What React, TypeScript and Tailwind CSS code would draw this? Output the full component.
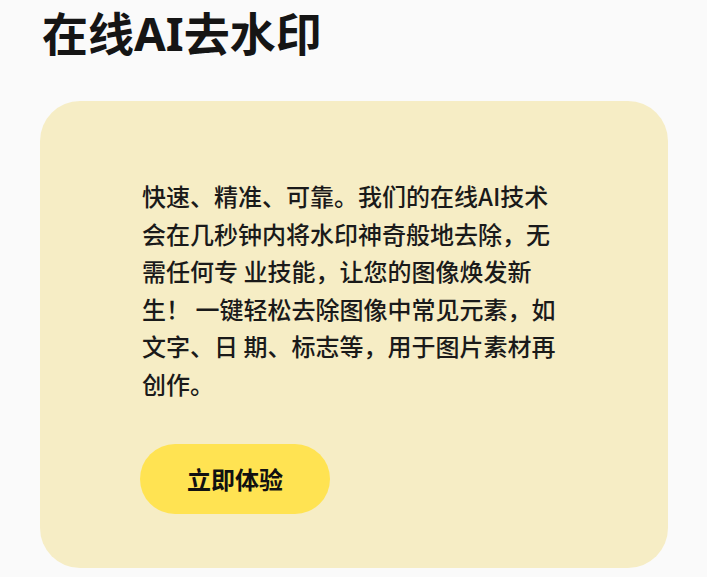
export default function App() {
  return (
    <div className="min-h-[577px] bg-[#fafafa] px-10 pt-[6px] font-['Noto_Sans_CJK_SC','Noto_Sans',sans-serif] text-[#1a1a1a]">
      <h1 className="font-['Noto_Sans','Noto_Sans_CJK_SC',sans-serif] text-[46px] font-bold leading-[54px] pl-[2px] text-[#151515]">
        在线AI去水印
      </h1>
      <div className="mt-[41px] w-[628px] rounded-[40px] bg-[#f6edc5] pl-[100px] pr-10 pt-[76px] pb-[54px]">
        <p className="w-[420px] text-[24px] font-medium leading-[37.6px] pl-[2px]">
          快速、精准、可靠。我们的在线AI技术会在几秒钟内将水印神奇般地去除，无需任何专 业技能，让您的图像焕发新生！ 一键轻松去除图像中常见元素，如文字、日 期、标志等，用于图片素材再创作。
        </p>
        <button className="mt-[41px] h-[70px] w-[190px] rounded-full bg-[#ffe352] text-[24px] font-bold text-[#111]">
          立即体验
        </button>
      </div>
    </div>
  );
}
